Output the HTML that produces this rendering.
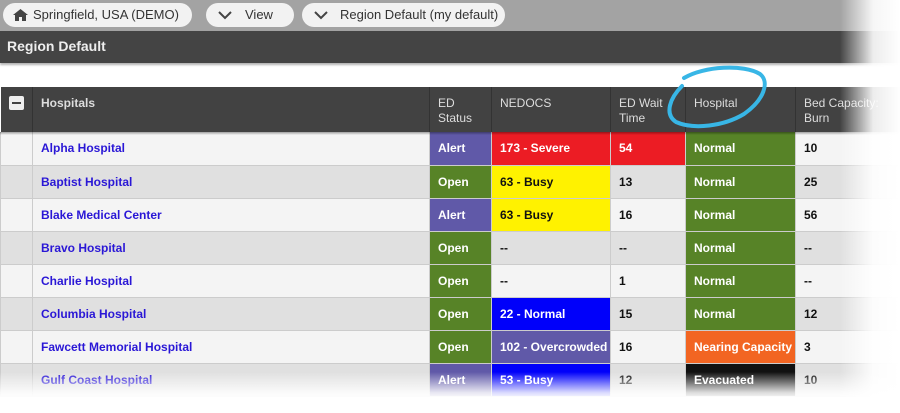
<!DOCTYPE html>
<html><head><style>
*{margin:0;padding:0;box-sizing:border-box}
html,body{width:900px;height:413px;overflow:hidden}
body{background:#fff;font-family:"Liberation Sans",sans-serif;position:relative}
.top{position:absolute;left:0;top:0;width:900px;height:31px;background:#a3a3a3}
.pill{position:absolute;top:3px;height:24px;background:#f2f2f2;border-radius:12px;font-size:13px;color:#333;line-height:24px}
.bar{position:absolute;left:0;top:31px;width:900px;height:32px;background:#444;color:#eee;font-size:14px;font-weight:bold;line-height:30px;padding-left:7px;box-shadow:0 2px 2px rgba(0,0,0,.3)}
table{position:absolute;left:0;top:87px;border-collapse:collapse;table-layout:fixed;width:900px}
th{background:#424242;color:#ddd;font-size:12px;font-weight:normal;text-align:left;vertical-align:top;padding:9px 8px 0;height:45px;border-left:1px solid #333;line-height:15px}
td{height:33px;font-size:12px;font-weight:bold;padding:0 8px;border-bottom:1px solid #ccc;border-left:1px solid #ccc;color:#111;white-space:nowrap}
tr:nth-child(even) td{background:#f4f4f4}
tr:nth-child(odd) td{background:#e0e0e0}
td.n{color:#2a17d6}
tr td.al{background:#6059a8;color:#fff}
tr td.op{background:#578327;color:#fff}
tr td.rd{background:#ec1c24;color:#fff}
tr td.yl{background:#fff200;color:#111}
tr td.bl{background:#0000fa;color:#fff}
tr td.pu{background:#6059a8;color:#fff}
tr td.or{background:#f26522;color:#fff}
tr td.bk{background:#111;color:#fff}
.hs{position:absolute;left:0;top:132px;width:900px;height:3px;background:linear-gradient(rgba(0,0,0,.35),rgba(0,0,0,0))}
.fr{position:absolute;right:0;top:0;width:60px;height:413px;background:linear-gradient(to right,rgba(255,255,255,0),rgba(255,255,255,.9) 55%,#fff)}
.fb{position:absolute;left:0;top:372px;width:900px;height:41px;background:linear-gradient(to bottom,rgba(255,255,255,0),rgba(255,255,255,.85) 50%,rgba(255,255,255,.97) 62%,rgba(255,255,255,.98))}
</style></head><body>
<div class="top"></div>
<div class="pill" style="left:3px;width:189px;padding-left:30px"><svg style="position:absolute;left:10px;top:6px" width="15" height="12" viewBox="0 0 15 12"><path d="M7.5 0L0 6h2v6h4V8h3v4h4V6h2z" fill="#444"/></svg>Springfield, USA (DEMO)</div>
<div class="pill" style="left:206px;width:88px;padding-left:39px"><svg style="position:absolute;left:12px;top:8px" width="14" height="9" viewBox="0 0 14 9"><path d="M1 1l6 6 6-6" stroke="#444" stroke-width="2" fill="none"/></svg>View</div>
<div class="pill" style="left:302px;width:203px;padding-left:38px"><svg style="position:absolute;left:12px;top:8px" width="14" height="9" viewBox="0 0 14 9"><path d="M1 1l6 6 6-6" stroke="#444" stroke-width="2" fill="none"/></svg>Region Default (my default)</div>
<div class="bar">Region Default</div>
<table>
<colgroup><col style="width:32px"><col style="width:397px"><col style="width:62px"><col style="width:119px"><col style="width:75px"><col style="width:110px"><col style="width:105px"></colgroup>
<tr><th style="padding:9px 0 0 8px;border-left:none"><div style="width:15px;height:14px;background:#eee;border-radius:2px;position:relative"><div style="position:absolute;left:3px;top:6px;width:9px;height:2px;background:#424242"></div></div></th><th style="font-weight:bold">Hospitals</th><th>ED<br>Status</th><th>NEDOCS</th><th>ED Wait<br>Time</th><th>Hospital</th><th>Bed Capacity:<br>Burn</th></tr>
<tr><td></td><td class="n">Alpha Hospital</td><td class="al">Alert</td><td class="rd">173 - Severe</td><td class="rd">54</td><td class="op">Normal</td><td>10</td></tr>
<tr><td></td><td class="n">Baptist Hospital</td><td class="op">Open</td><td class="yl">63 - Busy</td><td>13</td><td class="op">Normal</td><td>25</td></tr>
<tr><td></td><td class="n">Blake Medical Center</td><td class="al">Alert</td><td class="yl">63 - Busy</td><td>16</td><td class="op">Normal</td><td>56</td></tr>
<tr><td></td><td class="n">Bravo Hospital</td><td class="op">Open</td><td>--</td><td>--</td><td class="op">Normal</td><td>--</td></tr>
<tr><td></td><td class="n">Charlie Hospital</td><td class="op">Open</td><td>--</td><td>1</td><td class="op">Normal</td><td>--</td></tr>
<tr><td></td><td class="n">Columbia Hospital</td><td class="op">Open</td><td class="bl">22 - Normal</td><td>15</td><td class="op">Normal</td><td>12</td></tr>
<tr><td></td><td class="n">Fawcett Memorial Hospital</td><td class="op">Open</td><td class="pu">102 - Overcrowded</td><td>16</td><td class="or">Nearing Capacity</td><td>3</td></tr>
<tr><td></td><td class="n">Gulf Coast Hospital</td><td class="al">Alert</td><td class="bl">53 - Busy</td><td>12</td><td class="bk">Evacuated</td><td>10</td></tr>
</table>
<div class="hs"></div>
<svg style="position:absolute;left:664px;top:64px" width="106" height="70" viewBox="0 0 106 70"><path d="M20 14C40 2 80 0 96 10c10 8 4 26-16 40C60 62 30 66 12 58 0 50 6 34 18 22" stroke="#38b6e6" stroke-width="4" fill="none" stroke-linecap="round"/></svg>
<div class="fr"></div>
<div class="fb"></div>
</body></html>
